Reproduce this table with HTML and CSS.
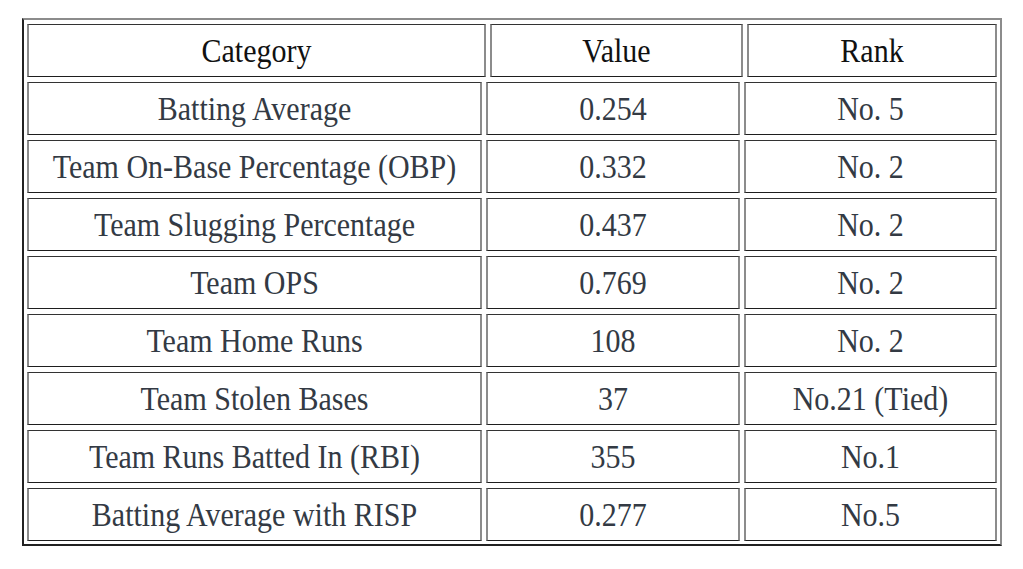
FILE: index.html
```html
<!DOCTYPE html>
<html>
<head>
<meta charset="utf-8">
<link rel="stylesheet" href="styles.css">
</head>
<body>
<div class="table">
  <div class="row head">
    <div class="cell"><span>Category</span></div>
    <div class="cell"><span>Value</span></div>
    <div class="cell"><span>Rank</span></div>
  </div>
  <div class="row">
    <div class="cell"><span>Batting Average</span></div>
    <div class="cell"><span>0.254</span></div>
    <div class="cell"><span>No. 5</span></div>
  </div>
  <div class="row">
    <div class="cell"><span>Team On-Base Percentage (OBP)</span></div>
    <div class="cell"><span>0.332</span></div>
    <div class="cell"><span>No. 2</span></div>
  </div>
  <div class="row">
    <div class="cell"><span>Team Slugging Percentage</span></div>
    <div class="cell"><span>0.437</span></div>
    <div class="cell"><span>No. 2</span></div>
  </div>
  <div class="row">
    <div class="cell"><span>Team OPS</span></div>
    <div class="cell"><span>0.769</span></div>
    <div class="cell"><span>No. 2</span></div>
  </div>
  <div class="row">
    <div class="cell"><span>Team Home Runs</span></div>
    <div class="cell"><span>108</span></div>
    <div class="cell"><span>No. 2</span></div>
  </div>
  <div class="row">
    <div class="cell"><span>Team Stolen Bases</span></div>
    <div class="cell"><span>37</span></div>
    <div class="cell"><span>No.21 (Tied)</span></div>
  </div>
  <div class="row">
    <div class="cell"><span>Team Runs Batted In (RBI)</span></div>
    <div class="cell"><span>355</span></div>
    <div class="cell"><span>No.1</span></div>
  </div>
  <div class="row">
    <div class="cell"><span>Batting Average with RISP</span></div>
    <div class="cell"><span>0.277</span></div>
    <div class="cell"><span>No.5</span></div>
  </div>
</div>
</body>
</html>
```

FILE: styles.css
```css
html, body {
  margin: 0;
  padding: 0;
  background: #ffffff;
}

body {
  padding: 18px 0 0 22px;
  font-family: "Liberation Serif", "Times New Roman", serif;
}

.table {
  width: 980px;
  box-sizing: border-box;
  border-top: 2px solid #8c8c8c;
  border-right: 2px solid #8c8c8c;
  border-left: 2px solid #222222;
  border-bottom: 2px solid #222222;
  padding: 4px 3px 3px 3px;
  display: flex;
  flex-direction: column;
  gap: 5px;
}

.row {
  display: grid;
  grid-template-columns: 455px 254px 253px;
  column-gap: 4px;
  height: 53px;
}

.row.head {
  grid-template-columns: 459px 253px 250px;
}

.cell {
  box-sizing: border-box;
  border-top: 1px solid #333333;
  border-bottom: 1px solid #1e1e1e;
  border-left: 2px solid #8c8c8c;
  border-right: 2px solid #8c8c8c;
  display: flex;
  align-items: center;
  justify-content: center;
  font-size: 30px;
  color: #333a44;
  white-space: nowrap;
}

.head .cell {
  color: #111111;
}

.cell span {
  display: inline-block;
  transform: scaleY(1.12);
}
```
